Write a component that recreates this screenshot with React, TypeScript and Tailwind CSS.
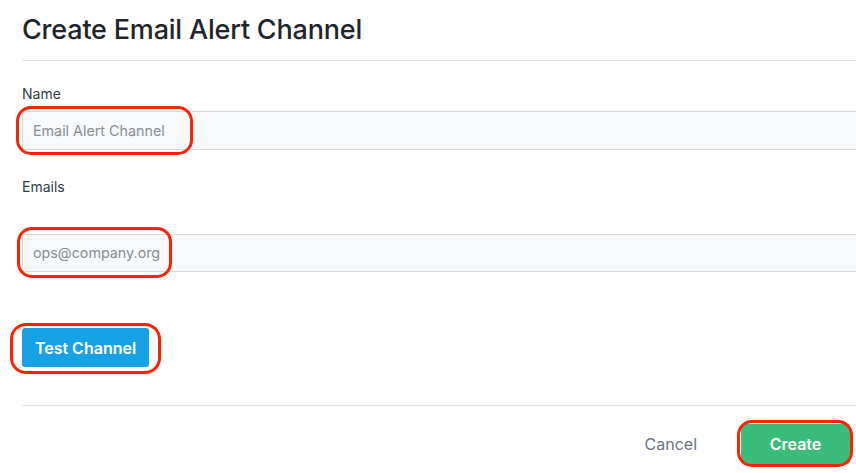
import React from "react";

function Oval({ className }: { className: string }) {
  return (
    <div
      className={`pointer-events-none absolute border-[3px] border-[#ff2200] ${className}`}
    />
  );
}

export default function App() {
  return (
    <div
      className="w-[856px] h-[473px] overflow-hidden bg-white pl-[22px]"
      style={{ fontFamily: "Inter, 'Noto Sans', sans-serif" }}
    >
      <h1 className="pt-[13px] text-[27px] leading-[33px] font-medium text-[#212529] tracking-[-0.2px]">
        Create Email Alert Channel
      </h1>
      <div className="mt-[14px] h-px bg-[#e2e4e7]" />

      <div className="mt-[25px] text-[14px] leading-[16px] text-[#2f3b46]">Name</div>
      <div className="relative mt-[9px]">
        <div className="h-[39px] flex items-center rounded-l-[3px] border border-r-0 border-[#d6d8db] bg-[#f8f9fb] pl-[10px] text-[14.3px] text-[#868e96]">
          Email Alert Channel
        </div>
        <Oval className="left-[-6px] top-[-5px] w-[177px] h-[49px] rounded-[15px]" />
      </div>

      <div className="mt-[29px] text-[14px] leading-[16px] text-[#2f3b46]">Emails</div>
      <div className="relative mt-[39px]">
        <div className="h-[38px] flex items-center rounded-l-[3px] border border-r-0 border-[#d6d8db] bg-[#f8f9fb] pl-[10px] text-[14.3px] text-[#868e96]">
          ops@company.org
        </div>
        <Oval className="left-[-5px] top-[-7px] w-[155px] h-[51px] rounded-[15px]" />
      </div>

      <div className="relative mt-[56px] w-fit">
        <button className="h-[39px] w-[127px] rounded-[3px] bg-[#18a2e6] text-[16px] font-semibold text-white">
          Test Channel
        </button>
        <Oval className="left-[-12px] top-[-5px] w-[151px] h-[51px] rounded-[16px]" />
      </div>

      <div className="mt-[38px] h-px bg-[#e2e4e7]" />

      <div className="mt-[18px] flex items-center justify-end pr-[6px]">
        <span className="text-[16px] text-[#6b7785] mr-[44px]">Cancel</span>
        <div className="relative">
          <button className="h-[40px] w-[109px] rounded-[3px] bg-[#3abd7b] text-[16px] font-semibold text-white">
            Create
          </button>
          <Oval className="left-[-4px] top-[-4px] w-[116px] h-[47px] rounded-[15px]" />
        </div>
      </div>
    </div>
  );
}
